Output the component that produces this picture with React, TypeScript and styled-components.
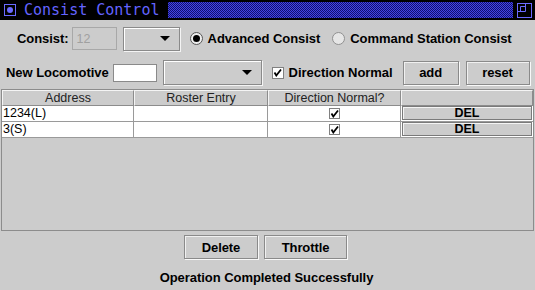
import React from "react";
import styled, { createGlobalStyle } from "styled-components";

const Global = createGlobalStyle`
  html, body { margin: 0; padding: 0; background: #cccccc; }
  body { width: 535px; height: 290px; overflow: hidden; font-family: "Liberation Sans", Arial, sans-serif; }
`;

const Frame = styled.div`
  width: 535px;
  height: 290px;
  background: #cccccc;
  display: flex;
  flex-direction: column;
`;

const TitleBar = styled.div`
  height: 20px;
  background: #000;
  display: flex;
  align-items: center;
  padding: 0 2px 0 4px;
  box-sizing: border-box;
`;

const TitleIcon = styled.div`
  width: 10px;
  height: 10px;
  border: 1px solid #6a6aff;
  display: flex;
  align-items: center;
  justify-content: center;
  &::after {
    content: "";
    width: 6px;
    height: 6px;
    border-radius: 50%;
    background: #6a6aff;
  }
`;

const TitleText = styled.span`
  font-family: "DejaVu Sans Mono", "Liberation Mono", monospace;
  font-size: 15px;
  color: #6464ff;
  margin-left: 8px;
`;

const Dither = styled.div`
  flex: 1;
  height: 16px;
  margin-left: 9px;
  background: repeating-conic-gradient(#4444e0 0 25%, #101070 0 50%) 0 0 / 2px 2px;
`;

const MaxIcon = styled.div`
  width: 18px;
  height: 18px;
  margin-left: 2px;
  display: flex;
  align-items: center;
  justify-content: center;
`;

const Row = styled.div<{ $pl: number; $h: number }>`
  display: flex;
  align-items: center;
  padding-left: ${(p) => p.$pl}px;
  height: ${(p) => p.$h}px;
`;

const Label = styled.span<{ $ml?: number }>`
  font-weight: bold;
  font-size: 13px;
  letter-spacing: -0.05px;
  color: #000;
  margin-left: ${(p) => p.$ml ?? 0}px;
  white-space: nowrap;
`;

const TextField = styled.div<{ $w: number; $h: number; $ml: number; $disabled?: boolean }>`
  width: ${(p) => p.$w}px;
  height: ${(p) => p.$h}px;
  margin-left: ${(p) => p.$ml}px;
  box-sizing: border-box;
  border: 1px solid ${(p) => (p.$disabled ? "#a8a8a8" : "#8a8a8a")};
  background: ${(p) => (p.$disabled ? "#cccccc" : "#fff")};
  color: #a0a0a0;
  font-size: 12.5px;
  padding-left: 4px;
  display: flex;
  align-items: center;
`;

const Combo = styled.div<{ $w: number; $h: number; $ml: number }>`
  width: ${(p) => p.$w}px;
  height: ${(p) => p.$h}px;
  margin-left: ${(p) => p.$ml}px;
  box-sizing: border-box;
  border: 1px solid #8a8a8a;
  box-shadow: inset 1px 1px 0 #fff, 1px 1px 0 #f4f4f4;
  background: #cccccc;
  display: flex;
  align-items: center;
  justify-content: flex-end;
  padding-right: 9px;
  &::after {
    content: "";
    border-left: 5px solid transparent;
    border-right: 5px solid transparent;
    border-top: 5px solid #000;
  }
`;

const Radio = styled.span<{ $on?: boolean; $ml: number }>`
  width: 13px;
  height: 13px;
  margin-left: ${(p) => p.$ml}px;
  box-sizing: border-box;
  border-radius: 50%;
  border: 1px solid ${(p) => (p.$on ? "#555" : "#909090")};
  background: ${(p) => (p.$on ? "#eeeeee" : "#e6e6e6")};
  display: flex;
  align-items: center;
  justify-content: center;
  &::after {
    content: "";
    width: 7px;
    height: 7px;
    border-radius: 50%;
    background: ${(p) => (p.$on ? "#000" : "transparent")};
  }
`;

const Check = styled.span<{ $size: number; $ml?: number }>`
  width: ${(p) => p.$size}px;
  height: ${(p) => p.$size}px;
  margin-left: ${(p) => p.$ml ?? 0}px;
  box-sizing: border-box;
  border: 1px solid #808080;
  background: #fff;
  display: inline-flex;
  align-items: center;
  justify-content: center;
`;

const Button = styled.div<{ $w: number; $h: number; $ml: number }>`
  width: ${(p) => p.$w}px;
  height: ${(p) => p.$h}px;
  margin-left: ${(p) => p.$ml}px;
  box-sizing: border-box;
  border: 1px solid #8a8a8a;
  box-shadow: 1px 1px 0 #f8f8f8, inset 1px 1px 0 #f0f0f0;
  background: #cccccc;
  font-weight: bold;
  font-size: 13px;
  letter-spacing: -0.1px;
  display: flex;
  align-items: center;
  justify-content: center;
`;

const Table = styled.div`
  margin: 1px 1px 0 1px;
  height: 142px;
  box-sizing: border-box;
  border: 1px solid #8c8c8c;
  background: #cccccc;
  display: flex;
  flex-direction: column;
`;

const Grid = styled.div`
  display: grid;
  grid-template-columns: 132px 134px 133px 1fr;
`;

const HeadCell = styled.div`
  height: 16px;
  box-sizing: border-box;
  border: 1px solid #8c8c8c;
  border-top-color: #f4f4f4;
  border-left-color: #f4f4f4;
  background: #cccccc;
  font-size: 12.5px;
  color: #222;
  display: flex;
  align-items: center;
  justify-content: center;
  line-height: 1;
`;

const Cell = styled.div<{ $align?: string }>`
  height: 16px;
  box-sizing: border-box;
  border-right: 1px solid #9a9a9a;
  border-bottom: 1px solid #9a9a9a;
  background: #fff;
  font-size: 12.5px;
  display: flex;
  align-items: center;
  justify-content: ${(p) => p.$align ?? "flex-start"};
  padding-left: ${(p) => (p.$align ? 0 : 1)}px;
  line-height: 1;
`;

const DelCell = styled.div`
  height: 16px;
  box-sizing: border-box;
  border-bottom: 1px solid #9a9a9a;
  background: #fff;
  padding: 0 1px 1px 1px;
  display: flex;
`;

const DelButton = styled.div`
  flex: 1;
  box-sizing: border-box;
  border: 1px solid #7a7a7a;
  box-shadow: inset 1px 1px 0 #f4f4f4;
  background: #cccccc;
  font-weight: bold;
  font-size: 12.5px;
  display: flex;
  align-items: center;
  justify-content: center;
  line-height: 1;
`;

const Bottom = styled.div`
  display: flex;
  justify-content: center;
  margin-top: 4px;
  padding-right: 4px;
`;

const Status = styled.div`
  text-align: center;
  font-weight: bold;
  font-size: 13px;
  letter-spacing: -0.05px;
  margin-top: 11px;
  padding-right: 2px;
`;

const Tick = () => (
  <svg width="9" height="9" viewBox="0 0 9 9">
    <path d="M1.5 4.5 L3.3 7.5 L8 1.5" stroke="#000" strokeWidth="1.8" fill="none" />
  </svg>
);

const rows = [
  { addr: "1234(L)", roster: "" },
  { addr: "3(S)", roster: "" },
];

export default function App() {
  return (
    <Frame>
      <Global />
      <TitleBar>
        <TitleIcon />
        <TitleText>Consist Control</TitleText>
        <Dither />
        <MaxIcon>
          <svg width="15" height="15" viewBox="0 0 15 15">
            <rect x="0.5" y="0.5" width="14" height="14" fill="none" stroke="#6a6aff" />
            <path d="M0.5 8.5 H8.5 V0.5" fill="none" stroke="#6a6aff" />
            <path d="M3.5 8.5 V3.5 H8.5" fill="none" stroke="#6a6aff" />
          </svg>
        </MaxIcon>
      </TitleBar>
      <Row $pl={17} $h={37}>
        <Label>Consist:</Label>
        <TextField $w={45} $h={23} $ml={3} $disabled>12</TextField>
        <Combo $w={57} $h={24} $ml={6} />
        <Radio $on $ml={10} />
        <Label $ml={5}>Advanced Consist</Label>
        <Radio $ml={12} />
        <Label $ml={5}>Command Station Consist</Label>
      </Row>
      <Row $pl={6} $h={31}>
        <Label>New Locomotive</Label>
        <TextField $w={44} $h={18} $ml={4} />
        <Combo $w={99} $h={25} $ml={6} />
        <Check $size={12} $ml={10}>
          <Tick />
        </Check>
        <Label $ml={5}>Direction Normal</Label>
        <Button $w={56} $h={24} $ml={10}>add</Button>
        <Button $w={64} $h={24} $ml={7}>reset</Button>
      </Row>
      <Table>
        <Grid>
          <HeadCell>Address</HeadCell>
          <HeadCell>Roster Entry</HeadCell>
          <HeadCell>Direction Normal?</HeadCell>
          <HeadCell />
          {rows.map((r) => (
            <React.Fragment key={r.addr}>
              <Cell>{r.addr}</Cell>
              <Cell>{r.roster}</Cell>
              <Cell $align="center">
                <Check $size={11}>
                  <Tick />
                </Check>
              </Cell>
              <DelCell>
                <DelButton>DEL</DelButton>
              </DelCell>
            </React.Fragment>
          ))}
        </Grid>
      </Table>
      <Bottom>
        <Button $w={74} $h={24} $ml={0}>Delete</Button>
        <Button $w={83} $h={24} $ml={6}>Throttle</Button>
      </Bottom>
      <Status>Operation Completed Successfully</Status>
    </Frame>
  );
}
